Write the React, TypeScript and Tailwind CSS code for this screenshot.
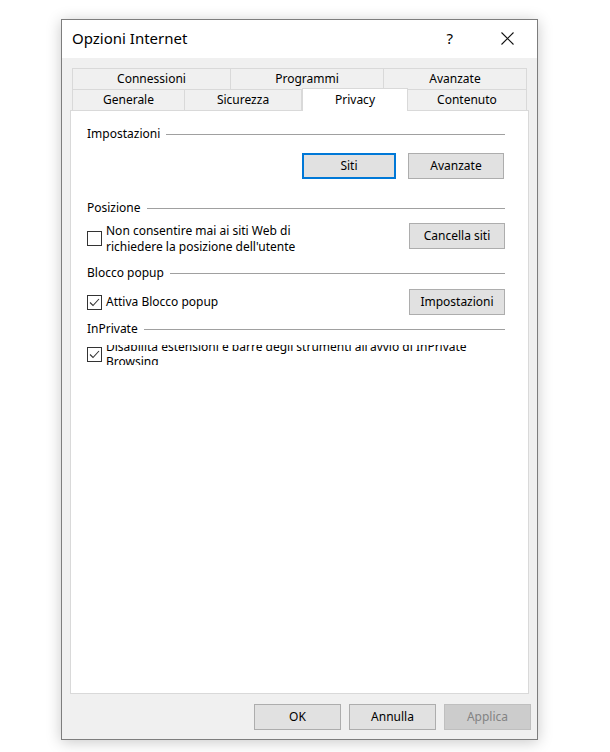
const font = { fontFamily: '"Noto Sans", "Liberation Sans", sans-serif' };

function Btn({ label, focused, disabled, w = 'w-[96px]', className = '' }: { label: string; focused?: boolean; disabled?: boolean; w?: string; className?: string }) {
  const base = 'h-[26px] flex items-center justify-center text-[12px]';
  const look = disabled
    ? 'bg-[#cccccc] border border-[#bfbfbf] text-[#838383]'
    : focused
    ? 'bg-[#e1e1e1] border-2 border-[#0078d7] text-black'
    : 'bg-[#e1e1e1] border border-[#adadad] text-black';
  return <div className={`${base} ${w} ${look} ${className}`}>{label}</div>;
}

function Check({ checked }: { checked?: boolean }) {
  return (
    <div className="w-[15px] h-[15px] border border-[#333] bg-white flex items-center justify-center shrink-0">
      {checked && (
        <svg width="11" height="9" viewBox="0 0 11 9">
          <path d="M1 4.5 L4 7.5 L10 1" fill="none" stroke="#333" strokeWidth="1.1" />
        </svg>
      )}
    </div>
  );
}

function Section({ title }: { title: string }) {
  return (
    <div className="flex items-center h-[16px]">
      <span className="text-[12px] text-black leading-[16px]">{title}</span>
      <div className="flex-1 h-px bg-[#a0a0a0] ml-[6px]" />
    </div>
  );
}

export default function App() {
  const row1 = [
    { t: 'Connessioni', w: 'w-[159px]' },
    { t: 'Programmi', w: 'w-[153px]' },
    { t: 'Avanzate', w: 'w-[143px]' },
  ];
  return (
    <div className="w-[610px] h-[752px] bg-white pt-[19px] pl-[61px]" style={font}>
      <div className="w-[477px] h-[721px] border border-[#7d7d7d] bg-[#f0f0f0] shadow-[0_2px_14px_rgba(0,0,0,0.22)] flex flex-col">
        {/* title bar */}
        <div className="h-[38px] bg-white flex items-center pl-[10px] pb-[2px] shrink-0">
          <span className="text-[15px] text-black flex-1">Opzioni Internet</span>
          <span className="text-[15px] text-black mr-[48px]">?</span>
          <svg width="13" height="13" viewBox="0 0 13 13" className="mr-[23px]">
            <path d="M0.5 0.5 L12.5 12.5 M12.5 0.5 L0.5 12.5" stroke="#111" strokeWidth="1.1" />
          </svg>
        </div>

        <div className="flex-1 flex flex-col pl-[8px] pr-[8px] pt-[10px]">
          {/* tabs */}
          <div className="pl-[2px]">
            <div className="flex h-[21px]">
              {row1.map((r, i) => (
                <div
                  key={r.t}
                  className={`${r.w} h-[21px] border-t border-r border-[#d9d9d9] ${i === 0 ? 'border-l' : ''} flex items-center justify-center text-[12px] text-black`}
                >
                  {r.t}
                </div>
              ))}
            </div>
            <div className="flex h-[21px] items-end">
              <div className="w-[113px] h-[21px] border border-b-0 border-[#d9d9d9] flex items-center justify-center text-[12px]">Generale</div>
              <div className="w-[117px] h-[21px] border-t border-r border-[#d9d9d9] flex items-center justify-center text-[12px]">Sicurezza</div>
              <div className="w-[106px] h-[23px] -mt-[2px] bg-white border-t border-x border-[#d9d9d9] relative z-10 -mb-px flex items-start justify-center pt-[2px] text-[12px]">Privacy</div>
              <div className="w-[119px] h-[21px] border-t border-r border-[#d9d9d9] flex items-center justify-center text-[12px]">Contenuto</div>
            </div>
          </div>

          {/* panel */}
          <div className="w-[459px] h-[584px] bg-white border border-[#d9d9d9] pl-[16px] pr-[23px] pt-[15px]">
            <Section title="Impostazioni" />
            <div className="flex justify-end gap-[12px] mt-[11px] mr-[1px]">
              <Btn label="Siti" focused w="w-[94px]" />
              <Btn label="Avanzate" />
            </div>

            <div className="mt-[21px]">
              <Section title="Posizione" />
            </div>
            <div className="flex items-start mt-[6px]">
              <div className="pt-[9px]"><Check /></div>
              <div className="ml-[4px] text-[12px] leading-[16px] text-black flex-1 pt-px">
                Non consentire mai ai siti Web di
                <br />
                richiedere la posizione dell'utente
              </div>
              <Btn label="Cancella siti" className="mt-px" />
            </div>

            <div className="mt-[10px]">
              <Section title="Blocco popup" />
            </div>
            <div className="flex items-center mt-[8px]">
              <Check checked />
              <span className="ml-[4px] text-[12px] text-black flex-1">Attiva Blocco popup</span>
              <Btn label="Impostazioni" />
            </div>

            <div className="mt-[6px]">
              <Section title="InPrivate" />
            </div>
            <div className="flex items-start mt-[8px]">
              <div className="pt-[2px]"><Check checked /></div>
              <div className="ml-[4px] h-[20px] overflow-hidden flex-1">
                <div className="text-[12px] leading-[15px] text-black -mt-[6px]">
                  Disabilita estensioni e barre degli strumenti all'avvio di InPrivate
                  <br />
                  Browsing
                </div>
              </div>
            </div>
          </div>

          {/* bottom buttons */}
          <div className="flex justify-end gap-[8px] mt-[10px] -mr-[2px]">
            <Btn label="OK" w="w-[87px]" />
            <Btn label="Annulla" w="w-[87px]" />
            <Btn label="Applica" disabled w="w-[87px]" />
          </div>
        </div>
      </div>
    </div>
  );
}
